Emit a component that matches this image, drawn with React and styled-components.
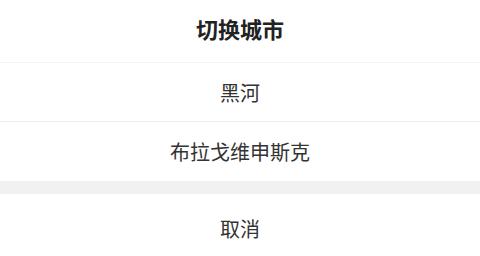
import React from "react";
import styled, { createGlobalStyle } from "styled-components";

const GlobalStyle = createGlobalStyle`
  html, body {
    margin: 0;
    padding: 0;
    background: #fff;
  }
  body {
    font-family: "Noto Sans CJK SC", "Noto Sans", sans-serif;
  }
`;

const Sheet = styled.div`
  width: 480px;
  display: flex;
  flex-direction: column;
  background: #fff;
`;

const Title = styled.div`
  height: 63px;
  box-sizing: border-box;
  padding-bottom: 6px;
  display: flex;
  align-items: center;
  justify-content: center;
  font-size: 22px;
  font-weight: 700;
  color: #222;
  border-bottom: 1px solid #f5f5f5;
`;

const Option = styled.div`
  height: ${(p) => p.$h || 58}px;
  display: flex;
  align-items: center;
  justify-content: center;
  font-size: 20px;
  color: #333;
  border-bottom: ${(p) => (p.$last ? "none" : "1px solid #ececec")};
`;

const Gap = styled.div`
  height: 13px;
  background: #f1f1f1;
`;

const cities = ["黑河", "布拉戈维申斯克"];

const App = () => {
  return (
    <>
      <GlobalStyle />
      <Sheet>
        <Title>切换城市</Title>
        {cities.map((c, i) => (
          <Option key={c} $last={i === cities.length - 1} $h={i === cities.length - 1 ? 59 : 58}>
            {c}
          </Option>
        ))}
        <Gap />
        <Option $last $h={68}>取消</Option>
      </Sheet>
    </>
  );
};

export default App;
